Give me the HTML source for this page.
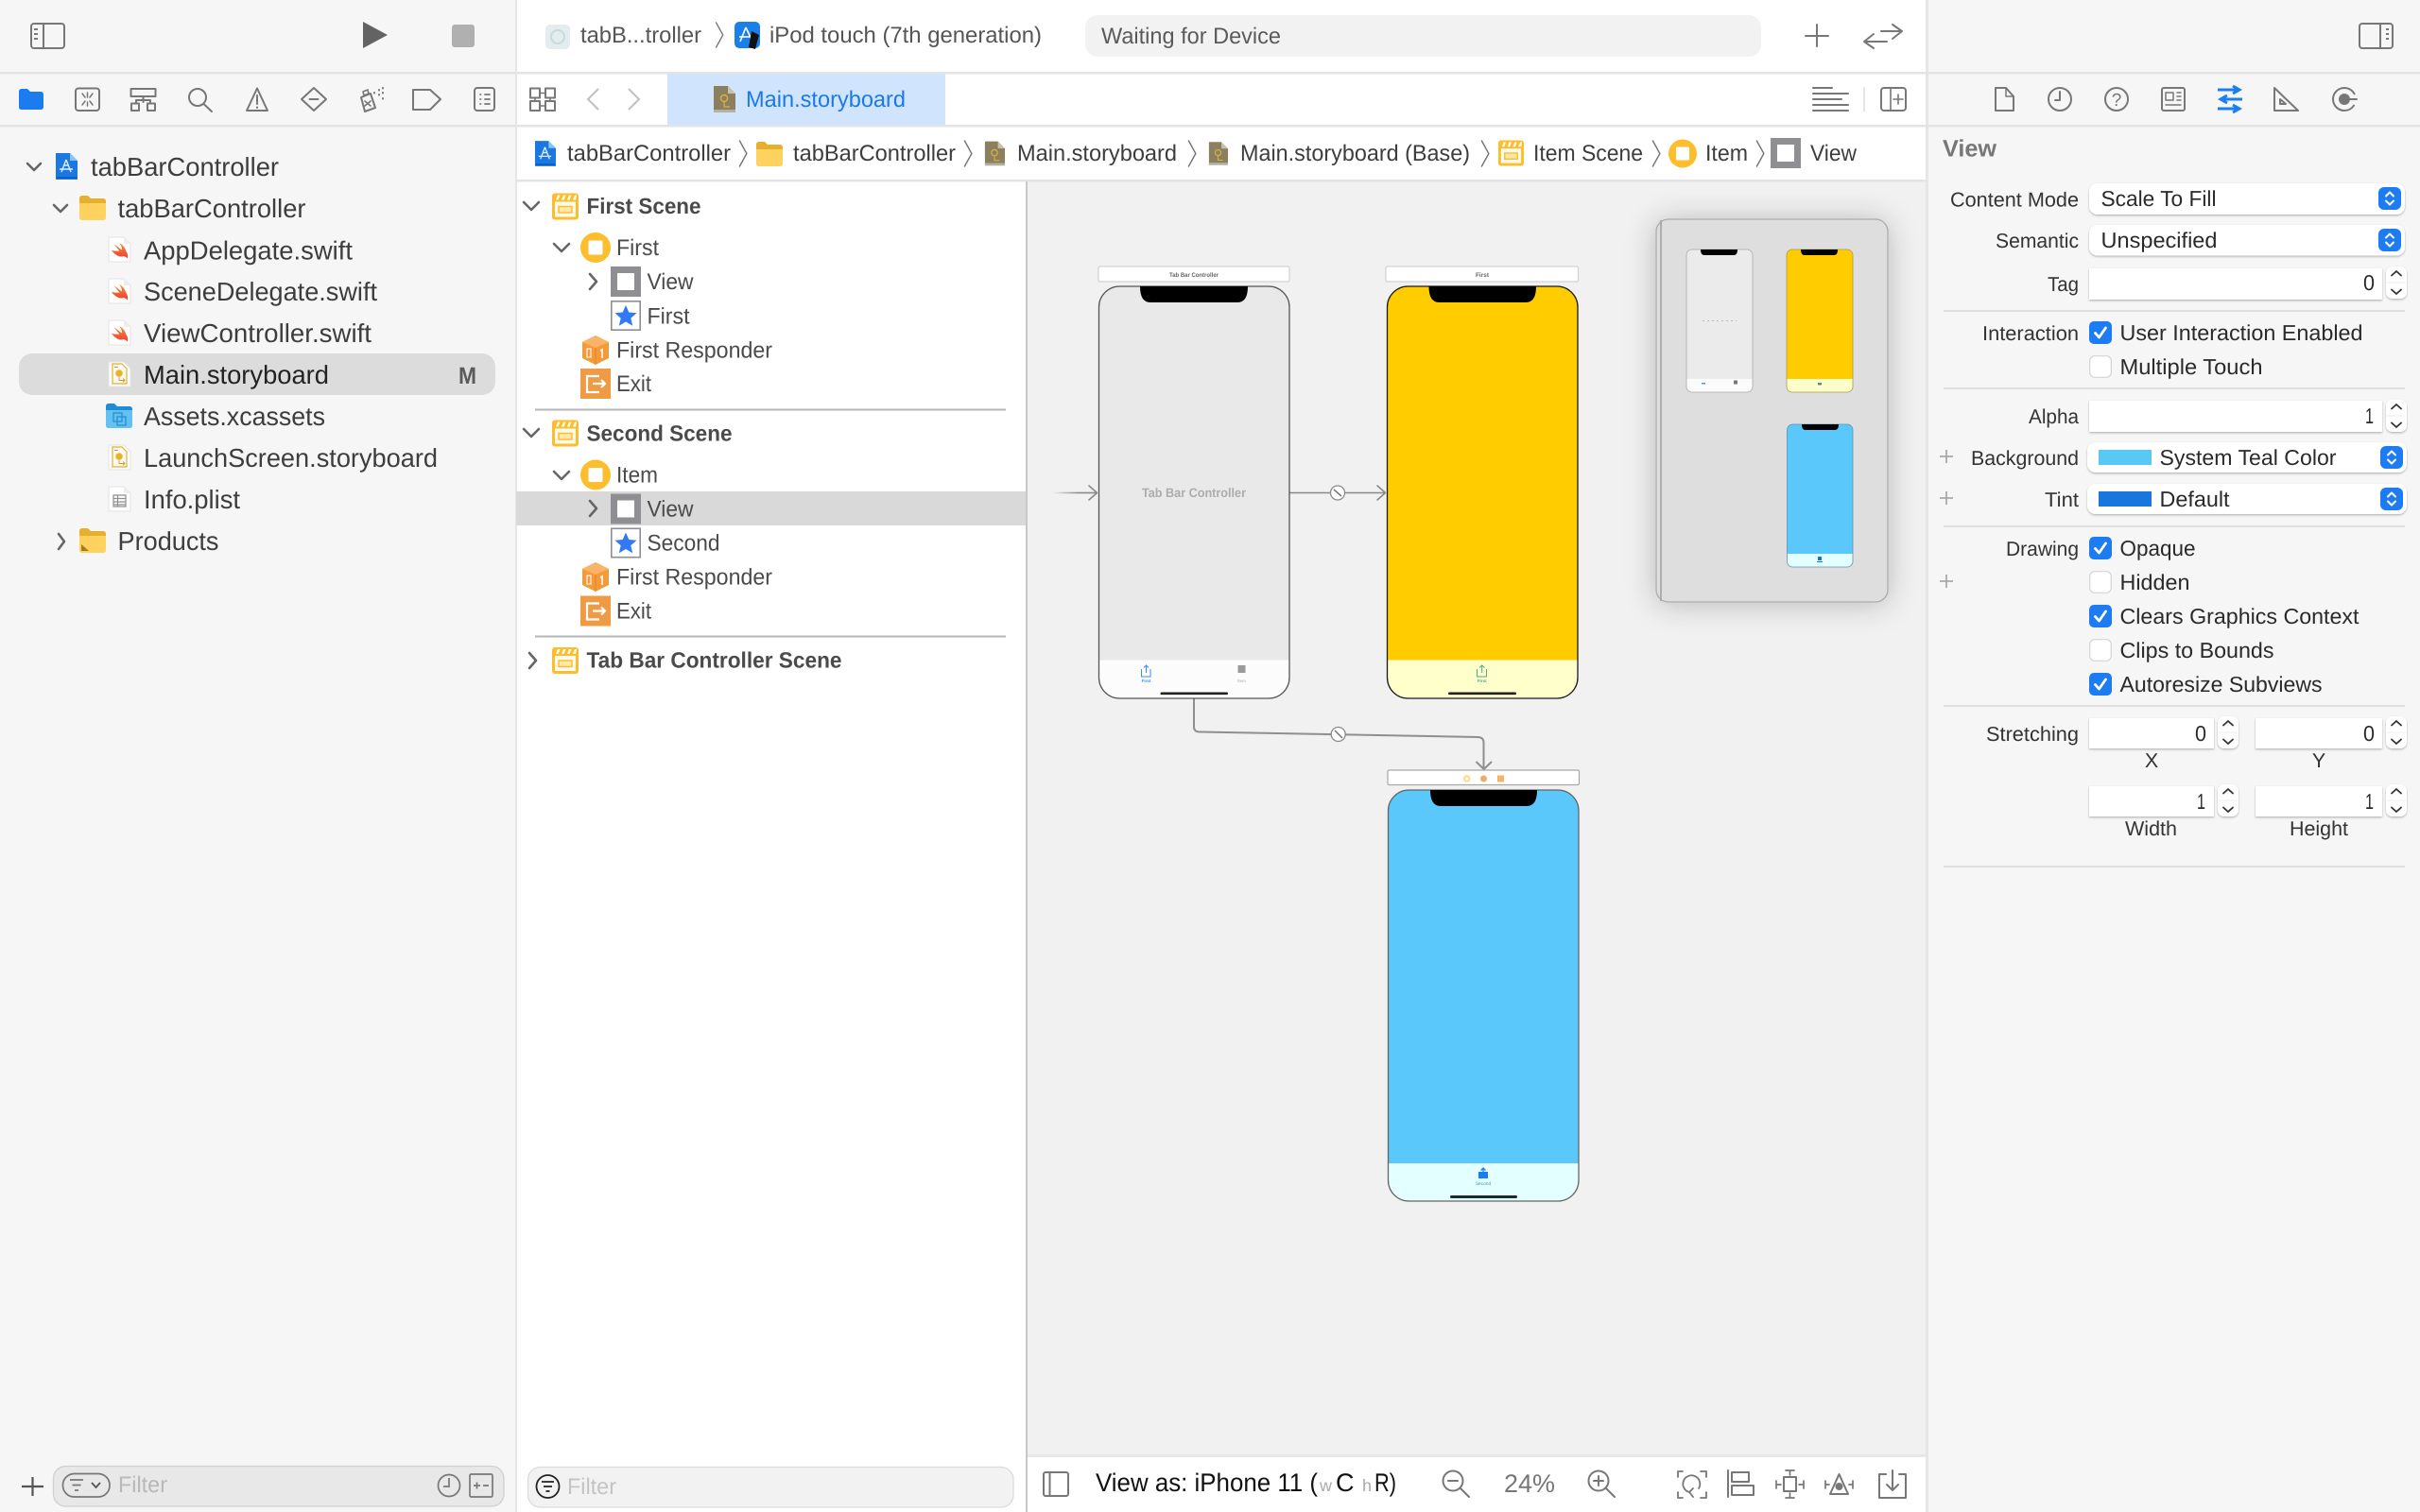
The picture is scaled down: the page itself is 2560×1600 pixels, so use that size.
<!DOCTYPE html>
<html><head><meta charset="utf-8"><style>
html,body{margin:0;padding:0;background:#fff}
svg{display:block}
text{font-family:"Liberation Sans",sans-serif;text-rendering:geometricPrecision}
.n{font-size:27.5px;fill:#3d3d3d}
.o{font-size:24px;fill:#4a4a4a}
.b{font-size:23.5px;font-weight:bold;fill:#4a4a4a}
.p{font-size:24px;fill:#3d3d3d}
.t{font-size:24px;fill:#555}
.l{font-size:21.5px;fill:#333;text-anchor:start}
.v{font-size:23px;fill:#2a2a2a}
.ic{fill:none;stroke:#777;stroke-width:2;stroke-linecap:round;stroke-linejoin:round}
.ch{fill:none;stroke:#666;stroke-width:2.6;stroke-linecap:round;stroke-linejoin:round}
.sep{stroke:#dedede;stroke-width:2}
.pth{fill:none;stroke:#8a8a8a;stroke-width:1.6;stroke-linejoin:round;stroke-linecap:round}
</style></head><body>
<svg xmlns="http://www.w3.org/2000/svg" width="2560" height="1600" viewBox="0 0 2560 1600">
<defs>
<filter id="sh" x="-5%" y="-20%" width="110%" height="150%"><feDropShadow dx="0" dy="1.2" stdDeviation="1" flood-color="#000" flood-opacity=".28"/></filter>
<filter id="mm" x="-30%" y="-30%" width="160%" height="160%"><feDropShadow dx="0" dy="2" stdDeviation="16" flood-color="#000" flood-opacity=".24"/></filter>
<linearGradient id="fade" x1="0" x2="1" y1="0" y2="0"><stop offset="0" stop-color="#8a8a8a" stop-opacity="0"/><stop offset=".6" stop-color="#8a8a8a"/></linearGradient>
<linearGradient id="sw" x1="0" x2="0" y1="0" y2="1"><stop offset="0" stop-color="#f88a36"/><stop offset="1" stop-color="#ee3f34"/></linearGradient>
<symbol id="proj" viewBox="0 0 24 28"><path d="M1 0H16L24 8V28H1Z" fill="#1a78e0"/><path d="M16 0L24 8H16Z" fill="#8cc4f6"/><path d="M2 25H23V27H2Z" fill="#0f5fc0"/><path d="M12 7L7 20M12 7L17 20M5 17H19M9 13H15" stroke="#dbeeff" stroke-width="1.4" fill="none"/></symbol>
<symbol id="folder" viewBox="0 0 28 26"><path d="M0 3Q0 0 3 0H9L12 3H25Q28 3 28 6V10H0Z" fill="#e6b02e"/><path d="M0 8H28V23Q28 26 25 26H3Q0 26 0 23Z" fill="#fdd25f"/></symbol>
<symbol id="folderp" viewBox="0 0 28 26"><path d="M0 3Q0 0 3 0H9L12 3H25Q28 3 28 6V10H0Z" fill="#e6b02e"/><path d="M0 8H28V23Q28 26 25 26H3Q0 26 0 23Z" fill="#fdd25f"/><path d="M2 17L10 24H2Z" fill="#a87a1a"/></symbol>
<symbol id="fassets" viewBox="0 0 28 26"><path d="M0 3Q0 0 3 0H9L12 3H25Q28 3 28 6V10H0Z" fill="#1e8dd6"/><path d="M0 7H28V23Q28 26 25 26H3Q0 26 0 23Z" fill="#62c1f0"/><rect x="8" y="10" width="9" height="9" fill="none" stroke="#2b8fd0" stroke-width="1.3"/><rect x="12" y="14" width="9" height="9" fill="none" stroke="#2b8fd0" stroke-width="1.3"/></symbol>
<symbol id="swift" viewBox="0 0 25 28"><path d="M1 1H17L24 8V27H1Z" fill="#fff" stroke="#e2e2e2"/><path d="M17 1V8H24Z" fill="#eee"/><path d="M4 15C7 19 12 23 17 21C18.500 21.500 20 22.500 21 23.500C21.500 21 21 18 19 15C18 11.500 15 8.500 12 7C14 9.500 15.500 12 15 14.500C12 12.500 9 10 6.500 8C8.500 11 10.500 13.500 12.500 15.500C10 15.800 7 15.500 4 15Z" fill="url(#sw)"/></symbol>
<symbol id="sbf" viewBox="0 0 25 28"><path d="M1 1H17L24 8V27H1Z" fill="#fff" stroke="#e2e2e2"/><path d="M5 3H15L20 8V24H5Z" fill="#fffdf3" stroke="#e3ad2e" stroke-width="1.2"/><circle cx="12" cy="13" r="3.800" fill="#eab12c"/><path d="M12 17V20.500H18M16 18.500L18 20.500L16 22.500M7 6.500H11" fill="none" stroke="#c79a3a" stroke-width="1"/></symbol>
<symbol id="plist" viewBox="0 0 25 28"><path d="M1 1H17L24 8V27H1Z" fill="#fff" stroke="#e2e2e2"/><path d="M17 1V8H24Z" fill="#eee"/><path d="M6 10H19V22H6ZM6 13.500H19M6 17H19M6 20H19M10.500 10V22" fill="none" stroke="#8f8f8f" stroke-width="1.200"/></symbol>
<symbol id="brown" viewBox="0 0 24 28"><path d="M1 0H16L24 8V27H1Z" fill="#8c7f60"/><path d="M16 0L24 8H16Z" fill="#c9c0a8"/><circle cx="12" cy="13" r="3.500" fill="none" stroke="#d8b240" stroke-width="1.400"/><path d="M12 17V22H18" fill="none" stroke="#d8b240" stroke-width="1.200"/><rect x="1" y="25" width="23" height="3" fill="#b5b0a4"/></symbol>
<symbol id="scene" viewBox="0 0 28 28"><rect width="28" height="28" rx="3" fill="#fdbe2d"/><path d="M4 7L6 2H8.500L6.500 7ZM10 7L12 2H14.500L12.500 7ZM16 7L18 2H20.500L18.500 7ZM22 7L24 2H26L25 7Z" fill="#fff"/><rect x="3" y="9" width="22" height="16" fill="#fffaf0"/><rect x="7" y="14" width="14" height="6.500" fill="#ffe9a8" stroke="#fdbe2d" stroke-width="1.500"/></symbol>
<symbol id="circ" viewBox="0 0 32 32"><circle cx="16" cy="16" r="16" fill="#fdbe2d"/><rect x="8.500" y="8.500" width="15" height="15" rx="1.500" fill="#fff"/></symbol>
<symbol id="view" viewBox="0 0 32 32"><rect width="32" height="32" fill="#8e8e93"/><rect x="7" y="7" width="18" height="18" fill="#fff"/></symbol>
<symbol id="star" viewBox="0 0 32 32"><rect x=".8" y=".8" width="30.400" height="30.400" fill="#fff" stroke="#8e8e93" stroke-width="1.600"/><path d="M16 5L19.300 12.500L27.500 13.300L21.300 18.700L23.200 26.700L16 22.500L8.800 26.700L10.700 18.700L4.500 13.300L12.700 12.500Z" fill="#3179f5"/></symbol>
<symbol id="cube" viewBox="0 0 28 31"><path d="M14 0L28 7V24L14 31L0 24V7Z" fill="#f39a3a"/><path d="M14 0L28 7L14 13L0 7Z" fill="#f8b468"/><path d="M14 13V31" stroke="#e2872a" stroke-width="1"/><rect x="5" y="14" width="4" height="9" fill="none" stroke="#fff" stroke-width="1.300" opacity=".8"/><path d="M19 16L21 15V24" fill="none" stroke="#fff" stroke-width="1.800" opacity=".85"/></symbol>
<symbol id="exit" viewBox="0 0 32 32"><rect width="32" height="32" fill="#ef9a45"/><path d="M20 8H7V25H20M20 22" fill="none" stroke="#fff" stroke-width="2.200"/><path d="M13 16H26M22 12L26 16L22 20" fill="none" stroke="#fff" stroke-width="2.200"/></symbol>
<symbol id="pbtn" viewBox="0 0 24 24"><rect width="24" height="24" rx="6" fill="#1d7cf2"/><path d="M8 9.500L12 5.500L16 9.500M8 14.500L12 18.500L16 14.500" fill="none" stroke="#fff" stroke-width="2" stroke-linecap="round" stroke-linejoin="round"/></symbol>
<symbol id="chk" viewBox="0 0 24 24"><rect width="24" height="24" rx="5" fill="#1d7cf2"/><path d="M6.500 12.500L10.500 17L17.500 7" fill="none" stroke="#fff" stroke-width="2.800" stroke-linecap="round" stroke-linejoin="round"/></symbol>
<symbol id="unc" viewBox="0 0 24 24"><rect x=".7" y=".7" width="22.600" height="22.600" rx="5" fill="#fff" stroke="#d4d4d4" stroke-width="1.200"/></symbol>
<symbol id="step" viewBox="0 0 22 34"><path d="M6 9.500L11 5L16 9.500M6 24.500L11 29L16 24.500" fill="none" stroke="#333" stroke-width="1.800" stroke-linecap="round" stroke-linejoin="round"/><path d="M1 17H21" stroke="#eee" stroke-width="1"/></symbol>
<symbol id="brk" viewBox="0 0 10 30"><path d="M1 0.500L9 15L1 29.500" fill="none" stroke="#777" stroke-width="1.500"/></symbol>
</defs>

<!-- backgrounds -->
<rect width="2560" height="1600" fill="#fff"/>
<rect x="0" y="0" width="546" height="1600" fill="#f6f6f6"/>
<rect x="2040" y="0" width="520" height="1600" fill="#f6f6f6"/>
<rect x="1087" y="192" width="951" height="1349" fill="#f1f1f1"/>
<rect x="1087" y="1539" width="951" height="3" fill="#e8e8e8"/>
<rect x="545" y="0" width="2" height="1600" fill="#e6e6e6"/>
<rect x="2037" y="0" width="3" height="1600" fill="#e6e6e6"/>
<rect x="0" y="76" width="2560" height="2.500" fill="#e4e4e4"/>
<rect x="0" y="132" width="2560" height="2.500" fill="#e4e4e4"/>
<rect x="546" y="190" width="1492" height="2.500" fill="#e4e4e4"/>
<rect x="1085" y="192" width="2" height="1408" fill="#c8c8c8"/>

<!-- top toolbar -->
<g class="ic" stroke-width="2.400"><rect x="33" y="25" width="35" height="26" rx="3"/><path d="M46 25V51"/></g>
<path d="M36 31H40M36 36H40M36 41H40" stroke="#777" stroke-width="2"/>
<path d="M384 23L410 37L384 51Z" fill="#636363"/>
<rect x="478" y="26" width="24" height="24" rx="3" fill="#b0b0b0"/>
<rect x="577" y="26" width="26" height="26" rx="5" fill="#e3ecee"/><circle cx="590" cy="39" r="7" fill="none" stroke="#c9d9dc" stroke-width="2"/>
<text x="614" y="45" class="t" textLength="128" lengthAdjust="spacingAndGlyphs">tabB...troller</text>
<use href="#brk" x="756" y="23" width="10" height="28"/>
<rect x="777" y="23" width="27" height="28" rx="5" fill="#1a7fe8"/><path d="M789 29L783 44M789 29L796 44M782 39H797" stroke="#fff" stroke-width="1.600" fill="none"/><path d="M795 33L803 37L799 52L792 50Z" fill="#111"/>
<text x="814" y="45" class="t" textLength="288" lengthAdjust="spacingAndGlyphs">iPod touch (7th generation)</text>
<rect x="1148" y="16" width="715" height="44" rx="13" fill="#f2f2f2"/>
<text x="1165" y="46" class="t" textLength="190" lengthAdjust="spacingAndGlyphs" style="fill:#5a5a5a">Waiting for Device</text>
<path d="M1922 26V49M1910 38H1934" class="ic"/>
<path d="M1990 33H2011M2002 26L2012 33L2002 41M1973 44H1996M1982 36L1972 44L1982 51" class="ic"/>
<g class="ic" stroke-width="2.400"><rect x="2496" y="25" width="35" height="26" rx="3"/><path d="M2518 25V51"/></g>
<path d="M2524 31H2527M2524 36H2527M2524 41H2527" stroke="#777" stroke-width="2"/>

<!-- nav tab icons -->
<path d="M20 97Q20 94 23 94H29L32 97H43Q46 97 46 100V113Q46 116 43 116H23Q20 116 20 113Z" fill="#1b7bf0"/>
<g class="ic">
<rect x="80" y="93.500" width="25" height="23.500" rx="3"/><path d="M92.500 98V103M92.500 108V112M87 99L90 103M98 99L95 103M87 111L90 107M98 111L95 107" stroke-width="1.500"/>
<rect x="138.500" y="94" width="26" height="8"/><path d="M151.500 102V108M144 108V106H159V108"/><rect x="139" y="109.500" width="8" height="7.500"/><rect x="156" y="109.500" width="8" height="7.500"/>
<circle cx="209" cy="103" r="9"/><path d="M215.500 110L224 118"/>
<path d="M272 93.500L261 117H283Z"/><path d="M272 101V110M272 113.500V114"/>
<path d="M332 93L345 105L332 117L319 105Z"/><path d="M327.500 105H336.500"/>
<path d="M382 103L392 99L397 114L386 118Z"/><path d="M385 101L390 99L389 95L384 97ZM386 107L392 112M392 107L386 112" stroke-width="1.600"/>
<path d="M396 98V98.500M401 95V95.500M405 93V93.500M401 100V100.500M405 98V98.500M405 104V104.500" stroke-width="2"/>
<path d="M437 95H455L466 105L455 116H437Z"/>
<rect x="502" y="93" width="21" height="24" rx="3"/><path d="M508 100H508.500M508 105H508.500M508 110H508.500M513 100H518M513 105H518M513 110H518" stroke-width="1.800"/>
<rect x="561" y="93.500" width="10" height="10"/><rect x="577" y="93.500" width="10" height="10"/><rect x="561" y="107" width="10" height="10"/><rect x="577" y="107" width="10" height="10"/><path d="M571 98.500H577M571 112H577M566 103.500V107M582 103.500V107" stroke-width="1.500"/>
</g>
<path d="M633 94L622 105L633 116" fill="none" stroke="#c0c0c0" stroke-width="2"/>
<path d="M665 94L676 105L665 116" fill="none" stroke="#c0c0c0" stroke-width="2"/>
<rect x="706" y="78.500" width="294" height="54" fill="#d0e5fd"/>
<use href="#brown" x="754" y="91" width="24" height="28"/>
<text x="789" y="113" class="p" textLength="169" lengthAdjust="spacingAndGlyphs" style="fill:#1a78ee">Main.storyboard</text>
<g class="ic"><path d="M1918 93H1938M1918 99H1955M1918 105H1948M1918 111H1955M1918 117H1955"/><rect x="1990" y="93" width="26" height="24" rx="3"/><path d="M2000 93V117M2008 100V110M2003 105H2013" stroke-width="1.600"/></g>
<path d="M1972 92V118" stroke="#dcdcdc" stroke-width="1.500"/>
<g class="ic">
<path d="M2111 93H2122L2130 102V117H2111Z"/><path d="M2122 93V102H2130" stroke-width="1.500"/>
<circle cx="2179" cy="105" r="12"/><path d="M2179 97V106H2174"/>
<circle cx="2239" cy="105" r="12"/>
<rect x="2287" y="93" width="24" height="24" rx="2"/><path d="M2291 98H2299V106H2291ZM2303 98H2307M2303 102H2307M2303 106H2307M2291 111H2307" stroke-width="1.500"/>
<path d="M2406 117V93L2431 117ZM2412 110V105L2418 110Z"/>
<circle cx="2480" cy="105" r="12" stroke-dasharray="62 14" stroke-dashoffset="-7"/><circle cx="2480" cy="105" r="5" fill="#777"/><path d="M2484 105H2493"/>
</g>
<text x="2239" y="112" font-size="19" fill="#777" text-anchor="middle">?</text>
<path d="M2346 95H2368M2362 91L2369 95L2362 99M2372 105H2350M2356 101L2349 105L2356 109M2346 115H2368M2362 111L2369 115L2362 119" fill="none" stroke="#1a7ff0" stroke-width="3"/>

<!-- file navigator -->
<rect x="20" y="374" width="504" height="44" rx="14" fill="#dcdcdc"/>
<path d="M29 173L36 180L43 173" class="ch"/>
<path d="M57 217L64 224L71 217" class="ch"/>
<path d="M62 565L68 573L62 581" class="ch"/>
<use href="#proj" x="58" y="162" width="24" height="28"/>
<use href="#folder" x="84" y="207" width="28" height="26"/>
<use href="#swift" x="114" y="250" width="25" height="28"/>
<use href="#swift" x="114" y="294" width="25" height="28"/>
<use href="#swift" x="114" y="338" width="25" height="28"/>
<use href="#sbf" x="114" y="382" width="25" height="28"/>
<use href="#fassets" x="112" y="427" width="28" height="26"/>
<use href="#sbf" x="114" y="470" width="25" height="28"/>
<use href="#plist" x="114" y="514" width="25" height="28"/>
<use href="#folderp" x="84" y="559" width="28" height="26"/>
<text x="96" y="186" class="n" textLength="199" lengthAdjust="spacingAndGlyphs">tabBarController</text>
<text x="124.500" y="230" class="n" textLength="199" lengthAdjust="spacingAndGlyphs">tabBarController</text>
<text x="152" y="274.500" class="n" textLength="221" lengthAdjust="spacingAndGlyphs">AppDelegate.swift</text>
<text x="152" y="318" class="n" textLength="247" lengthAdjust="spacingAndGlyphs">SceneDelegate.swift</text>
<text x="152" y="362" class="n" textLength="241" lengthAdjust="spacingAndGlyphs">ViewController.swift</text>
<text x="152" y="406" class="n" textLength="196" lengthAdjust="spacingAndGlyphs" style="fill:#222">Main.storyboard</text>
<text x="485" y="406" font-size="25" font-weight="bold" fill="#5a5a5a" textLength="19" lengthAdjust="spacingAndGlyphs">M</text>
<text x="152" y="450" class="n" textLength="192" lengthAdjust="spacingAndGlyphs">Assets.xcassets</text>
<text x="152" y="494" class="n" textLength="311" lengthAdjust="spacingAndGlyphs">LaunchScreen.storyboard</text>
<text x="152" y="538" class="n" textLength="102" lengthAdjust="spacingAndGlyphs">Info.plist</text>
<text x="124.500" y="582" class="n" textLength="107" lengthAdjust="spacingAndGlyphs">Products</text>

<!-- path bar -->
<use href="#proj" x="565" y="148" width="23" height="29"/>
<text x="600" y="170" class="p" textLength="173" lengthAdjust="spacingAndGlyphs">tabBarController</text>
<use href="#brk" x="781" y="148" width="10" height="29"/>
<use href="#folder" x="800" y="150" width="28" height="26"/>
<text x="839" y="170" class="p" textLength="172" lengthAdjust="spacingAndGlyphs">tabBarController</text>
<use href="#brk" x="1019" y="148" width="10" height="29"/>
<use href="#brown" x="1041" y="148" width="22" height="29"/>
<text x="1076" y="170" class="p" textLength="169" lengthAdjust="spacingAndGlyphs">Main.storyboard</text>
<use href="#brk" x="1256" y="148" width="10" height="29"/>
<use href="#brown" x="1278" y="148" width="21" height="29"/>
<text x="1312" y="170" class="p" textLength="243" lengthAdjust="spacingAndGlyphs">Main.storyboard (Base)</text>
<use href="#brk" x="1566" y="148" width="10" height="29"/>
<use href="#scene" x="1585" y="148" width="27" height="28"/>
<text x="1622" y="170" class="p" textLength="116" lengthAdjust="spacingAndGlyphs">Item Scene</text>
<use href="#brk" x="1747" y="148" width="10" height="29"/>
<use href="#circ" x="1765" y="147" width="30" height="31"/>
<text x="1804" y="170" class="p" textLength="45" lengthAdjust="spacingAndGlyphs">Item</text>
<use href="#brk" x="1857" y="148" width="10" height="29"/>
<use href="#view" x="1873" y="146" width="32" height="32"/>
<text x="1915" y="170" class="p" textLength="49" lengthAdjust="spacingAndGlyphs">View</text>

<!-- outline -->
<rect x="546" y="520" width="539" height="36" fill="#d9d9d9"/>
<path d="M554 214L562 222L570 214" class="ch"/>
<path d="M586 258L594 266L602 258" class="ch"/>
<path d="M624 290L631 298L624 306" class="ch"/>
<path d="M554 454L562 462L570 454" class="ch"/>
<path d="M586 499L594 507L602 499" class="ch"/>
<path d="M624 530L631 538L624 546" class="ch"/>
<path d="M560 691L567 699L560 707" class="ch"/>
<use href="#scene" x="584" y="204.500" width="28" height="28"/>
<use href="#circ" x="614" y="246" width="32" height="32"/>
<use href="#view" x="646" y="282" width="32" height="32"/>
<use href="#star" x="646" y="318" width="32" height="32"/>
<use href="#cube" x="616" y="355" width="28" height="31"/>
<use href="#exit" x="614" y="390" width="32" height="32"/>
<text x="620.500" y="226" class="b" textLength="121" lengthAdjust="spacingAndGlyphs">First Scene</text>
<text x="652" y="270" class="o" textLength="45" lengthAdjust="spacingAndGlyphs">First</text>
<text x="684.500" y="306" class="o" textLength="49" lengthAdjust="spacingAndGlyphs">View</text>
<text x="684.500" y="342.500" class="o" textLength="45" lengthAdjust="spacingAndGlyphs">First</text>
<text x="652" y="378.500" class="o" textLength="165" lengthAdjust="spacingAndGlyphs">First Responder</text>
<text x="652" y="414" class="o" textLength="37" lengthAdjust="spacingAndGlyphs">Exit</text>
<rect x="566" y="432.500" width="498" height="2" fill="#b5b5b5"/>
<use href="#scene" x="584" y="444.500" width="28" height="28"/>
<use href="#circ" x="614" y="486.500" width="32" height="32"/>
<use href="#view" x="646" y="522.500" width="32" height="32"/>
<use href="#star" x="646" y="558.500" width="32" height="32"/>
<use href="#cube" x="616" y="595" width="28" height="31"/>
<use href="#exit" x="614" y="630.500" width="32" height="32"/>
<text x="620.500" y="466.500" class="b" textLength="154" lengthAdjust="spacingAndGlyphs">Second Scene</text>
<text x="652" y="510.500" class="o" textLength="44" lengthAdjust="spacingAndGlyphs">Item</text>
<text x="684.500" y="546.500" class="o" textLength="49" lengthAdjust="spacingAndGlyphs">View</text>
<text x="684.500" y="582.500" class="o" textLength="77" lengthAdjust="spacingAndGlyphs">Second</text>
<text x="652" y="618.500" class="o" textLength="165" lengthAdjust="spacingAndGlyphs">First Responder</text>
<text x="652" y="654.500" class="o" textLength="37" lengthAdjust="spacingAndGlyphs">Exit</text>
<rect x="566" y="672.500" width="498" height="2" fill="#b5b5b5"/>
<use href="#scene" x="584" y="685" width="28" height="28"/>
<text x="620.500" y="706.500" class="b" textLength="270" lengthAdjust="spacingAndGlyphs">Tab Bar Controller Scene</text>

<!-- canvas: connections -->
<rect x="1113" y="520.700" width="47" height="1.600" fill="url(#fade)"/>
<path d="M1152 514L1160.500 521.500L1152 529" class="pth"/>
<path d="M1364 521.500H1465" class="pth"/>
<path d="M1457 514L1465.500 521.500L1457 529" class="pth"/>
<circle cx="1415" cy="521.500" r="7.500" fill="#fff" stroke="#8a8a8a" stroke-width="1.300"/>
<path d="M1411 518L1419 525" stroke="#777" stroke-width="1.500"/>
<path d="M1263 739V769Q1263 774.500 1269 774.500L1563 780Q1569.500 780 1569.500 786V814" fill="none" stroke="#8f8f8f" stroke-width="2"/>
<path d="M1561.500 806L1569.700 814L1578 806" fill="none" stroke="#8f8f8f" stroke-width="2"/>
<circle cx="1415.700" cy="777" r="7.500" fill="#fff" stroke="#8a8a8a" stroke-width="1.300"/>
<path d="M1412 773L1420 781" stroke="#777" stroke-width="1.500"/>

<!-- tab bar phone -->
<rect x="1162" y="282" width="202" height="16" rx="1.500" fill="#fff" stroke="#d2d2d2" stroke-width="1.200"/>
<text x="1237" y="293" font-size="6.500" font-weight="bold" fill="#666" textLength="52" lengthAdjust="spacingAndGlyphs">Tab Bar Controller</text>
<clipPath id="c1"><rect x="1162.500" y="303" width="201.500" height="436" rx="22"/></clipPath>
<g clip-path="url(#c1)"><rect x="1162" y="303" width="203" height="396" fill="#e9e9e9"/><rect x="1162" y="698.500" width="203" height="41" fill="#fcfcfc"/></g>
<rect x="1162.500" y="303" width="201.500" height="436" rx="22" fill="none" stroke="#555" stroke-width="1.300"/>
<path d="M1206 303H1320Q1320 320 1309 320H1217Q1206 320 1206 303Z" fill="#000"/>
<rect x="1227.500" y="732.500" width="71.500" height="2.600" rx="1.300" fill="#222"/>
<text x="1208" y="526" font-size="13.500" font-weight="bold" fill="#acacac" textLength="110" lengthAdjust="spacingAndGlyphs">Tab Bar Controller</text>
<path d="M1208 708.500H1207.500V716H1217V708.500H1216.500M1212.500 712V704.500M1210 706.500L1212.500 704L1215 706.500" fill="none" stroke="#3d8ff0" stroke-width="1"/>
<text x="1212.500" y="722" font-size="4.500" font-weight="bold" fill="#3d8ff0" text-anchor="middle">First</text>
<rect x="1309.500" y="704" width="8" height="8" fill="#9a9a9a"/>
<text x="1313.500" y="722" font-size="4.500" fill="#aaa" text-anchor="middle">Item</text>

<!-- yellow phone -->
<rect x="1466" y="282" width="203.500" height="16" rx="1.500" fill="#fff" stroke="#d2d2d2" stroke-width="1.200"/>
<text x="1568" y="293" font-size="6.500" font-weight="bold" fill="#666" text-anchor="middle">First</text>
<clipPath id="c2"><rect x="1467.500" y="303" width="201.500" height="436" rx="22"/></clipPath>
<g clip-path="url(#c2)"><rect x="1467" y="303" width="203" height="396" fill="#ffcc00"/><rect x="1467" y="698.500" width="203" height="41" fill="#ffffcb"/></g>
<rect x="1467.500" y="303" width="201.500" height="436" rx="22" fill="none" stroke="#1a1a1a" stroke-width="1.300"/>
<path d="M1511.500 303H1625Q1625 320 1614 320H1522.500Q1511.500 320 1511.500 303Z" fill="#000"/>
<rect x="1532" y="732.500" width="72" height="2.600" rx="1.300" fill="#222"/>
<path d="M1563 708.500H1562.500V716H1572.500V708.500H1572M1567.700 712V704.500M1565 706.500L1567.700 704L1570.500 706.500" fill="none" stroke="#4fa88a" stroke-width="1"/>
<text x="1567.700" y="722" font-size="4.500" font-weight="bold" fill="#4fa88a" text-anchor="middle">First</text>

<!-- blue phone -->
<rect x="1468" y="815" width="202.500" height="15.500" rx="1.500" fill="#fff" stroke="#a8a8a8" stroke-width="1.200"/>
<circle cx="1551.700" cy="824" r="2.800" fill="#fff" stroke="#ffd888" stroke-width="2"/>
<circle cx="1569.500" cy="824" r="3.500" fill="#e9ad6e"/>
<rect x="1584" y="820.500" width="7" height="7" fill="#f4b56b"/>
<clipPath id="c3"><rect x="1468.500" y="836" width="201.500" height="435" rx="22"/></clipPath>
<g clip-path="url(#c3)"><rect x="1468" y="836" width="203" height="395" fill="#5ac8fa"/><rect x="1468" y="1231" width="203" height="41" fill="#e4ffff"/></g>
<rect x="1468.500" y="836" width="201.500" height="435" rx="22" fill="none" stroke="#666" stroke-width="1.300"/>
<path d="M1513 836H1626Q1626 853 1615 853H1524Q1513 853 1513 836Z" fill="#000"/>
<rect x="1534" y="1265" width="71" height="3" rx="1.500" fill="#1c2a30"/>
<path d="M1564 1240H1574V1247H1564Z" fill="#1b7cf0"/><path d="M1569 1243V1236M1566.500 1238.500L1569 1236L1571.500 1238.500" fill="none" stroke="#1b7cf0" stroke-width="1.300"/>
<text x="1569" y="1254" font-size="4.800" fill="#4b8fe0" text-anchor="middle">Second</text>

<!-- minimap -->
<rect x="1752" y="232" width="245" height="405" rx="13" fill="#dedede" stroke="#ababab" stroke-width="1.300" filter="url(#mm)"/>
<path d="M1757 233V636" stroke="#a8a8a8" stroke-width="1.800"/>
<clipPath id="m1"><rect x="1784" y="264" width="70" height="151" rx="6"/></clipPath>
<g clip-path="url(#m1)"><rect x="1784" y="264" width="70" height="137" fill="#ebebeb"/><rect x="1784" y="401" width="70" height="14" fill="#fbfbfb"/></g>
<rect x="1784" y="264" width="70" height="151" rx="6" fill="none" stroke="#aaa" stroke-width=".8"/>
<path d="M1799 264H1838Q1838 270 1834 270H1803Q1799 270 1799 264Z" fill="#000"/>
<path d="M1801 339.500H1837" stroke="#bbb" stroke-width="1" stroke-dasharray="2 3"/>
<rect x="1834" y="402.500" width="4" height="4" fill="#777"/><rect x="1800" y="405" width="4" height="1.500" fill="#5b8fd0"/>
<clipPath id="m2"><rect x="1890" y="264" width="70" height="151" rx="6"/></clipPath>
<g clip-path="url(#m2)"><rect x="1890" y="264" width="70" height="137" fill="#ffcc00"/><rect x="1890" y="401" width="70" height="14" fill="#ffffcb"/></g>
<rect x="1890" y="264" width="70" height="151" rx="6" fill="none" stroke="#a89a50" stroke-width=".8"/>
<path d="M1905 264H1944Q1944 270 1940 270H1909Q1905 270 1905 264Z" fill="#000"/>
<rect x="1923" y="405" width="4" height="2.500" fill="#5c8a90"/>
<clipPath id="m3"><rect x="1890.500" y="449" width="69.500" height="151" rx="6"/></clipPath>
<g clip-path="url(#m3)"><rect x="1890" y="449" width="70" height="137" fill="#5ac8fa"/><rect x="1890" y="586" width="70" height="14" fill="#e4ffff"/></g>
<rect x="1890.500" y="449" width="69.500" height="151" rx="6" fill="none" stroke="#5f92ad" stroke-width=".8"/>
<path d="M1906 449H1945Q1945 455 1941 455H1910Q1906 455 1906 449Z" fill="#000"/>
<rect x="1923" y="589" width="4" height="4" fill="#1b6fd8"/><rect x="1922" y="594" width="6" height="1" fill="#1b6fd8"/>

<!-- bottom left filters -->
<path d="M34.500 1563V1583M23 1573H46" fill="none" stroke="#555" stroke-width="2.200"/>
<rect x="56.500" y="1551.500" width="476.500" height="42.500" rx="13" fill="#e8e8e8" stroke="#d0d0d0" stroke-width="1.300"/>
<rect x="66.500" y="1559.500" width="49.500" height="24.500" rx="12" fill="none" stroke="#777" stroke-width="1.700"/>
<path d="M74 1566H88M76.500 1571.500H85.500M79 1577H83" stroke="#777" stroke-width="1.800"/>
<path d="M97 1569L101.500 1574L106 1569" fill="none" stroke="#555" stroke-width="1.800"/>
<text x="125" y="1579" class="p" textLength="52" lengthAdjust="spacingAndGlyphs" style="fill:#b8b8b8">Filter</text>
<circle cx="475" cy="1572" r="11.500" fill="none" stroke="#777" stroke-width="1.700"/><path d="M475 1564V1573H469" fill="none" stroke="#777" stroke-width="1.700"/>
<rect x="497" y="1560" width="24" height="24" rx="1.500" fill="none" stroke="#777" stroke-width="1.700"/><path d="M501 1572H508M504.500 1568.500V1575.500M511 1572H517" stroke="#777" stroke-width="1.700"/>
<rect x="558.500" y="1552.500" width="513.500" height="42.500" rx="13" fill="#f2f2f2" stroke="#dcdcdc" stroke-width="1.300"/>
<circle cx="579.500" cy="1573" r="12" fill="none" stroke="#222" stroke-width="1.800"/>
<path d="M573 1568H586M575 1573H584M577.500 1578H581.500" stroke="#222" stroke-width="1.800"/>
<text x="600" y="1581" class="p" textLength="52" lengthAdjust="spacingAndGlyphs" style="fill:#c4c4c4">Filter</text>

<!-- bottom canvas bar -->
<g class="ic"><rect x="1104" y="1558" width="26" height="25" rx="2"/><path d="M1110.500 1558V1583"/></g>
<text x="1159" y="1578" font-size="27" fill="#111" textLength="235" lengthAdjust="spacingAndGlyphs">View as: iPhone 11 (</text>
<text x="1396" y="1578" font-size="18" fill="#aaa">w</text>
<text x="1413" y="1578" font-size="27" fill="#111">C</text>
<text x="1441" y="1578" font-size="18" fill="#aaa">h</text>
<text x="1454" y="1578" font-size="27" fill="#111" textLength="23" lengthAdjust="spacingAndGlyphs">R)</text>
<g class="ic">
<circle cx="1537" cy="1567" r="10.500"/><path d="M1532 1567H1542M1545 1575L1554 1584"/>
<circle cx="1691" cy="1567" r="10.500"/><path d="M1686 1567H1696M1691 1562V1572M1699 1575L1708 1584"/>
<path d="M1775 1563V1557H1780M1799 1557H1805V1563M1805 1579V1585H1799M1780 1585H1775V1579" stroke-width="1.800"/>
<path d="M1797 1575A9 9 0 1 0 1787 1579M1787 1579L1791 1575M1787 1579L1791 1584" stroke-width="1.800"/>
<path d="M1828 1556V1584"/><rect x="1832" y="1558" width="18" height="10"/><rect x="1832" y="1572" width="23" height="10"/>
<rect x="1887" y="1563" width="13" height="15"/><path d="M1879 1567V1575M1879 1571H1884M1908 1567V1575M1903 1571H1908M1889 1556H1898M1893.500 1556V1561M1889 1585H1898M1893.500 1580V1585" stroke-width="1.700"/>
<path d="M1945.500 1560L1955 1581H1936Z"/><circle cx="1945.500" cy="1573" r="3" fill="#777"/><path d="M1931 1567V1575M1931 1571H1935M1960 1567V1575M1956 1571H1960" stroke-width="1.700"/>
<path d="M1995 1560H1988V1585H2016V1560H2009M2002 1556V1577M1996 1571L2002 1577L2008 1571"/>
</g>
<text x="1591" y="1579" font-size="27" fill="#777" textLength="54" lengthAdjust="spacingAndGlyphs">24%</text>

<!-- inspector -->
<text x="2055" y="165.500" font-size="25" font-weight="bold" fill="#777" textLength="57" lengthAdjust="spacingAndGlyphs">View</text>
<text x="2063" y="218.500" class="l" textLength="136" lengthAdjust="spacingAndGlyphs">Content Mode</text>
<rect x="2210" y="194" width="334" height="33" rx="9" fill="#fff" filter="url(#sh)"/>
<use href="#pbtn" x="2516" y="198" width="24" height="24"/>
<text x="2222.500" y="218" class="v" textLength="122" lengthAdjust="spacingAndGlyphs">Scale To Fill</text>
<text x="2111" y="262" class="l" textLength="88" lengthAdjust="spacingAndGlyphs">Semantic</text>
<rect x="2210" y="238" width="334" height="32.500" rx="9" fill="#fff" filter="url(#sh)"/>
<use href="#pbtn" x="2516" y="242" width="24" height="24"/>
<text x="2222.500" y="262" class="v" textLength="123" lengthAdjust="spacingAndGlyphs">Unspecified</text>
<text x="2166" y="308" class="l" textLength="33" lengthAdjust="spacingAndGlyphs">Tag</text>
<rect x="2210" y="284" width="310" height="33" fill="#fff" filter="url(#sh)"/>
<text x="2500" y="307" class="v" textLength="12" lengthAdjust="spacingAndGlyphs">0</text>
<rect x="2524" y="282" width="22" height="34" rx="7" fill="#fff" filter="url(#sh)"/><use href="#step" x="2524" y="282" width="22" height="34"/>
<path d="M2056 329H2544" class="sep"/>
<text x="2097" y="360" class="l" textLength="102" lengthAdjust="spacingAndGlyphs">Interaction</text>
<use href="#chk" x="2210" y="340" width="24" height="24"/>
<text x="2242.500" y="360" class="v" textLength="257" lengthAdjust="spacingAndGlyphs">User Interaction Enabled</text>
<use href="#unc" x="2210" y="376" width="24" height="24"/>
<text x="2242.500" y="396" class="v" textLength="151" lengthAdjust="spacingAndGlyphs">Multiple Touch</text>
<path d="M2056 411H2544" class="sep"/>
<text x="2146" y="448" class="l" textLength="53" lengthAdjust="spacingAndGlyphs">Alpha</text>
<rect x="2210" y="424" width="310" height="33" fill="#fff" filter="url(#sh)"/>
<text x="2502" y="448" class="v" textLength="9" lengthAdjust="spacingAndGlyphs">1</text>
<rect x="2524" y="423" width="22" height="34" rx="7" fill="#fff" filter="url(#sh)"/><use href="#step" x="2524" y="423" width="22" height="34"/>
<path d="M2059 476V490M2052 483H2066M2059 520V534M2052 527H2066M2059 608V622M2052 615H2066" stroke="#a8a8a8" stroke-width="1.800"/>
<text x="2085" y="492" class="l" textLength="114" lengthAdjust="spacingAndGlyphs">Background</text>
<rect x="2208" y="468" width="338" height="32" rx="9" fill="#fff" filter="url(#sh)"/>
<rect x="2220" y="476" width="56" height="16" fill="#5ac8f5"/>
<text x="2284.500" y="492" class="v" textLength="187" lengthAdjust="spacingAndGlyphs">System Teal Color</text>
<use href="#pbtn" x="2518" y="472" width="24" height="24"/>
<text x="2163" y="536" class="l" textLength="36" lengthAdjust="spacingAndGlyphs">Tint</text>
<rect x="2208" y="512" width="338" height="32" rx="9" fill="#fff" filter="url(#sh)"/>
<rect x="2220" y="520" width="56" height="16" fill="#1976de"/>
<text x="2284.500" y="536" class="v" textLength="74" lengthAdjust="spacingAndGlyphs">Default</text>
<use href="#pbtn" x="2518" y="516" width="24" height="24"/>
<path d="M2056 557H2544" class="sep"/>
<text x="2122" y="588" class="l" textLength="77" lengthAdjust="spacingAndGlyphs">Drawing</text>
<use href="#chk" x="2210" y="568" width="24" height="24"/>
<text x="2242.500" y="588" class="v" textLength="80" lengthAdjust="spacingAndGlyphs">Opaque</text>
<use href="#unc" x="2210" y="604" width="24" height="24"/>
<text x="2242.500" y="624" class="v" textLength="74" lengthAdjust="spacingAndGlyphs">Hidden</text>
<use href="#chk" x="2210" y="640" width="24" height="24"/>
<text x="2242.500" y="660" class="v" textLength="253" lengthAdjust="spacingAndGlyphs">Clears Graphics Context</text>
<use href="#unc" x="2210" y="676" width="24" height="24"/>
<text x="2242.500" y="696" class="v" textLength="163" lengthAdjust="spacingAndGlyphs">Clips to Bounds</text>
<use href="#chk" x="2210" y="712" width="24" height="24"/>
<text x="2242.500" y="732" class="v" textLength="214" lengthAdjust="spacingAndGlyphs">Autoresize Subviews</text>
<path d="M2056 747H2544" class="sep"/>
<text x="2101" y="784" class="l" textLength="98" lengthAdjust="spacingAndGlyphs">Stretching</text>
<rect x="2210" y="760" width="132" height="32" fill="#fff" filter="url(#sh)"/>
<text x="2322" y="784" class="v" textLength="12" lengthAdjust="spacingAndGlyphs">0</text>
<rect x="2346" y="758" width="22" height="34" rx="7" fill="#fff" filter="url(#sh)"/><use href="#step" x="2346" y="758" width="22" height="34"/>
<rect x="2386" y="760" width="134" height="32" fill="#fff" filter="url(#sh)"/>
<text x="2500" y="784" class="v" textLength="12" lengthAdjust="spacingAndGlyphs">0</text>
<rect x="2524" y="758" width="22" height="34" rx="7" fill="#fff" filter="url(#sh)"/><use href="#step" x="2524" y="758" width="22" height="34"/>
<text x="2276" y="812" class="l" style="text-anchor:middle">X</text>
<text x="2453" y="812" class="l" style="text-anchor:middle">Y</text>
<rect x="2210" y="832" width="132" height="32" fill="#fff" filter="url(#sh)"/>
<text x="2324" y="856" class="v" textLength="9" lengthAdjust="spacingAndGlyphs">1</text>
<rect x="2346" y="830" width="22" height="34" rx="7" fill="#fff" filter="url(#sh)"/><use href="#step" x="2346" y="830" width="22" height="34"/>
<rect x="2386" y="832" width="134" height="32" fill="#fff" filter="url(#sh)"/>
<text x="2502" y="856" class="v" textLength="9" lengthAdjust="spacingAndGlyphs">1</text>
<rect x="2524" y="830" width="22" height="34" rx="7" fill="#fff" filter="url(#sh)"/><use href="#step" x="2524" y="830" width="22" height="34"/>
<text x="2248" y="884" class="l" textLength="55" lengthAdjust="spacingAndGlyphs">Width</text>
<text x="2422" y="884" class="l" textLength="62" lengthAdjust="spacingAndGlyphs">Height</text>
<path d="M2056 917H2544" class="sep"/>
</svg>
</body></html>
